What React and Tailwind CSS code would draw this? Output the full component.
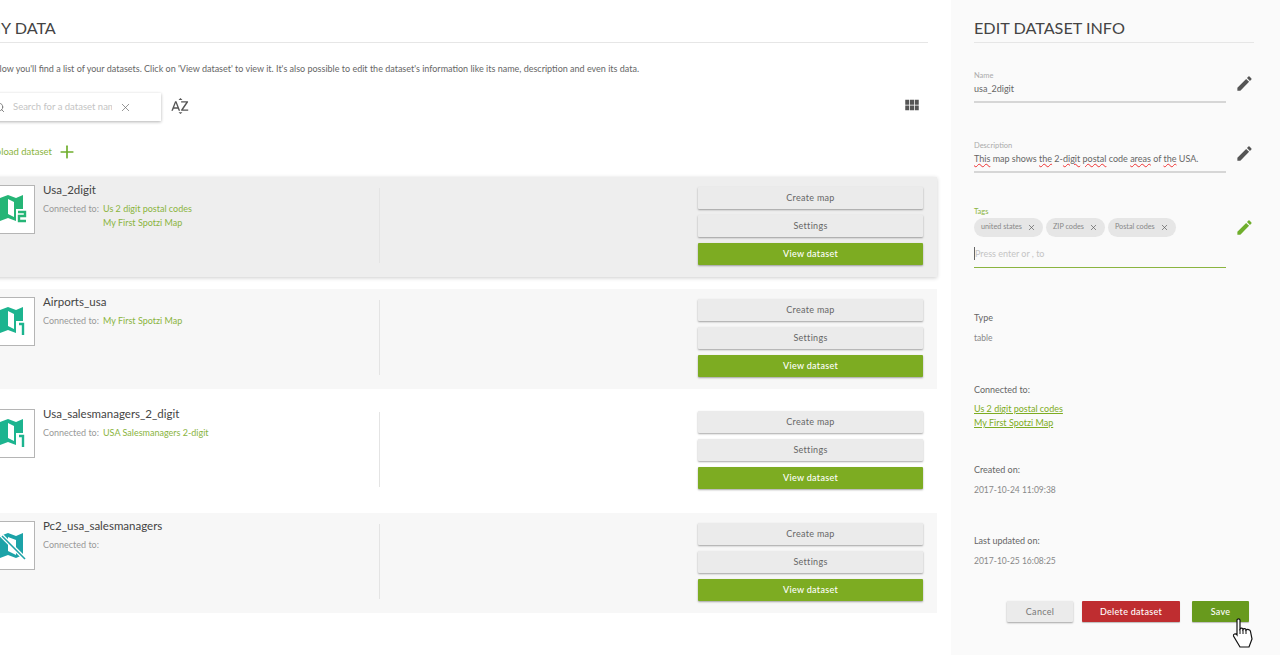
import { Plus, Search, X } from "lucide-react";
import { MdEdit, MdSortByAlpha, MdViewModule } from "react-icons/md";

const datasets = [
  { name: "Usa_2digit", links: ["Us 2 digit postal codes", "My First Spotzi Map"], count: "2", bg: "bg-[#eeeeee] shadow-[0_1px_4px_rgba(0,0,0,0.2)]" },
  { name: "Airports_usa", links: ["My First Spotzi Map"], count: "1", bg: "bg-[#f7f7f7]" },
  { name: "Usa_salesmanagers_2_digit", links: ["USA Salesmanagers 2-digit"], count: "1", bg: "bg-white" },
  { name: "Pc2_usa_salesmanagers", links: [], count: null, bg: "bg-[#f7f7f7]" },
];

const MapIcon = ({ count }) => {
  const color = count === "2" ? "#25b576" : count === "1" ? "#1cb48f" : "#1ca3a8";
  if (!count) {
    return (
      <svg width="47" height="47" viewBox="0 0 47 47">
        <path d="M13 14 L21 11 L29 14 L36 11 L36 33 L29 36 L21 33 L13 36 Z M21 15 L21 29 L29 33 L29 18 Z" fill={color} fillRule="evenodd" />
        <path d="M14 13 L37 36" stroke="#fff" strokeWidth="4" />
        <path d="M15 14 L38 37" stroke={color} strokeWidth="1.6" />
      </svg>
    );
  }
  return (
    <svg width="47" height="47" viewBox="0 0 47 47">
      <path d="M13 12 L21 9 L29 12 L36 9 L36 23 L29 23 L29 35 L21 32 L13 35 Z M21 13 L21 28 L27 31 L27 16 Z" fill={color} fillRule="evenodd" />
      {count === "2" && <path d="M31 26 H38 V30 H32 V35 H39" fill="none" stroke={color} strokeWidth="2.4" />}
      {count === "1" && <path d="M32 26 H36 V37" fill="none" stroke={color} strokeWidth="2.4" />}
    </svg>
  );
};

const GreyButton = ({ children }) => (
  <button className="h-[22px] w-full rounded-[1px] bg-[#ebebeb] text-[9px] tracking-[0.3px] text-[#666] shadow-[0_1px_2px_rgba(0,0,0,0.35)]">
    {children}
  </button>
);

const DatasetRow = ({ item }) => (
  <div className={`flex h-[100px] w-[951px] pr-[14px] ${item.bg}`}>
    <div className="mt-2 flex h-[49px] w-[49px] shrink-0 items-center justify-center border border-[#b5b5b5] bg-white">
      <MapIcon count={item.count} />
    </div>
    <div className="ml-2 mt-[5px] w-[336px] shrink-0 text-[9px] text-[#999]">
      <div className="text-[11.5px] leading-[16px] text-[#444]">{item.name}</div>
      <div className="mt-[4px] flex">
        <span className="w-[60px] shrink-0 whitespace-nowrap leading-[14px]">Connected to:</span>
        <div className="leading-[14px] text-[#8ab440]">
          {item.links.map((l) => (
            <div key={l}>{l}</div>
          ))}
        </div>
      </div>
    </div>
    <div className="mt-[11px] h-[75px] w-px bg-[#e4e4e4]" />
    <div className="ml-[318px] mt-[10px] flex w-[226px] flex-col gap-[6px]">
      <GreyButton>Create map</GreyButton>
      <GreyButton>Settings</GreyButton>
      <button className="h-[22px] w-full rounded-[1px] bg-[#7dac22] text-[9px] font-medium tracking-[0.3px] text-white shadow-[0_1px_2px_rgba(0,0,0,0.35)]">
        View dataset
      </button>
    </div>
  </div>
);

const Field = ({ label, value, mt }) => (
  <div className={`flex ${mt}`}>
    <div className="w-[252px] border-b-2 border-[#d6d6d6] pb-[5px]">
      <div className="text-[7.5px] leading-[10px] text-[#aaa]">{label}</div>
      <div className="mt-px whitespace-nowrap text-[9px] leading-[14px] text-[#666]">{value}</div>
    </div>
    <MdEdit size={19} className="ml-[9px] mt-[3px] text-[#555]" />
  </div>
);

const Squiggle = ({ children }) => (
  <span className="underline decoration-[#e33] decoration-wavy decoration-1">{children}</span>
);

const Tag = ({ children }) => (
  <span className="flex h-[19px] items-center gap-[5px] rounded-full bg-[#e6e6e6] px-[7px] text-[7.25px] text-[#888]">
    {children}
    <X size={9} strokeWidth={1.75} className="text-[#555]" />
  </span>
);

const Meta = ({ label, value, mt }) => (
  <div className={mt}>
    <div className="text-[9px] leading-[12px] text-[#666]">{label}</div>
    <div className="mt-[8px] text-[8.5px] leading-[12px] text-[#888]">{value}</div>
  </div>
);

export default function App() {
  return (
    <div className="flex h-[655px] w-[1280px] overflow-hidden bg-white font-['Lato',sans-serif]">
      <main className="relative w-[951px] shrink-0 overflow-hidden">
        <div className="ml-[-14px] w-[965px]">
          <div className="mr-[23px] h-[43px] border-b border-[#e6e6e6] pt-[17px] text-[16.2px] leading-[22px] text-[#444]">
            MY DATA
          </div>
          <p className="mt-[19px] whitespace-nowrap pl-[3px] text-[9px] leading-[14px] text-[#666]">
            Below you'll find a list of your datasets. Click on 'View dataset' to view it. It's also possible to edit the dataset's information like its name, description and even its data.
          </p>
          <div className="mt-[17px] flex h-[28px] items-center pr-[30px]">
            <div className="flex h-[28px] w-[175px] items-center bg-white pl-[8px] shadow-[0_1px_3px_rgba(0,0,0,0.3)]">
              <Search size={11} className="text-[#777]" />
              <span className="ml-[8px] w-[99px] overflow-hidden whitespace-nowrap text-[9.5px] text-[#c4c4c4]">Search for a dataset name</span>
              <X size={13} strokeWidth={1.25} className="ml-[7px] text-[#666]" />
            </div>
            <MdSortByAlpha size={20} className="mb-[3px] ml-[9px] text-[#555]" />
            <MdViewModule size={18} className="mb-[4px] ml-auto text-[#555]" />
          </div>
          <div className="mt-[23px] flex h-[16px] items-center pl-[3px] text-[9.5px] text-[#8ab440]">
            Upload dataset
            <Plus size={20} strokeWidth={2} className="ml-[5px] text-[#6fae2c]" />
          </div>
          <div className="mt-[17px] flex flex-col gap-[12px]">
            {datasets.map((item) => (
              <DatasetRow key={item.name} item={item} />
            ))}
          </div>
        </div>
      </main>
      <aside className="relative flex-1 bg-[#fafafa] pl-[23px] pr-[28px]">
        <div className="h-[43px] border-b border-[#e6e6e6] pt-[17px] text-[16.2px] leading-[22px] text-[#444]">
          EDIT DATASET INFO
        </div>
        <Field label="Name" value="usa_2digit" mt="mt-[28px]" />
        <Field
          label="Description"
          mt="mt-[38px]"
          value={
            <>
              <Squiggle>This</Squiggle> map shows <Squiggle>the</Squiggle> 2-<Squiggle>digit</Squiggle> <Squiggle>postal</Squiggle> code <Squiggle>areas</Squiggle> of <Squiggle>the</Squiggle> USA.
            </>
          }
        />
        <div className="mt-[34px] flex">
          <div className="h-[61px] w-[252px] border-b border-[#8ab440]">
            <div className="text-[7.5px] leading-[10px] text-[#8ab440]">Tags</div>
            <div className="mt-px flex gap-[3px]">
              <Tag>united states</Tag>
              <Tag>ZIP codes</Tag>
              <Tag>Postal codes</Tag>
            </div>
            <div className="mt-[10px] border-l border-[#666] text-[9px] leading-[13px] text-[#c4c4c4]">Press enter or , to</div>
          </div>
          <MdEdit size={19} className="ml-[9px] mt-[11px] text-[#6fae2c]" />
        </div>
        <Meta label="Type" value="table" mt="mt-[44px]" />
        <div className="mt-[40px]">
          <div className="text-[9px] leading-[12px] text-[#666]">Connected to:</div>
          <div className="mt-[6px] text-[9px] leading-[14px] text-[#7dac22] underline">
            <div>Us 2 digit postal codes</div>
            <div>My First Spotzi Map</div>
          </div>
        </div>
        <Meta label="Created on:" value="2017-10-24 11:09:38" mt="mt-[34px]" />
        <Meta label="Last updated on:" value="2017-10-25 16:08:25" mt="mt-[39px]" />
        <div className="mt-[34px] flex pl-[33px]">
          <button className="h-[21px] w-[66px] rounded-[1px] bg-[#ebebeb] text-[9px] tracking-[0.3px] text-[#777] shadow-[0_1px_2px_rgba(0,0,0,0.35)]">Cancel</button>
          <button className="ml-[9px] h-[21px] w-[98px] rounded-[1px] bg-[#bf2d30] text-[9px] font-medium tracking-[0.3px] text-white shadow-[0_1px_1px_rgba(0,0,0,0.25)]">Delete dataset</button>
          <button className="ml-[12px] h-[21px] w-[57px] rounded-[1px] bg-[#689a1d] text-[9px] font-medium tracking-[0.3px] text-white shadow-[0_1px_1px_rgba(0,0,0,0.25)]">Save</button>
        </div>
        <svg className="absolute left-[281px] top-[618px]" width="24" height="31" viewBox="0 0 24 31">
          <path d="M5 2 C5 0.5 8 0.5 8 2 L8 11 C9 9.5 11 10 11 11.5 C12 10 14 10.5 14 12 C15 11 18.5 11.5 18.5 13.5 L20 21 L17 29 L8 29 L1.5 18 C1 16 3.5 15 5 17 Z" fill="#fff" stroke="#111" strokeWidth="1.2" />
          <path d="M8 11 V16 M11 11.5 V16 M14 12 V16" stroke="#111" strokeWidth="1" />
        </svg>
      </aside>
    </div>
  );
}
